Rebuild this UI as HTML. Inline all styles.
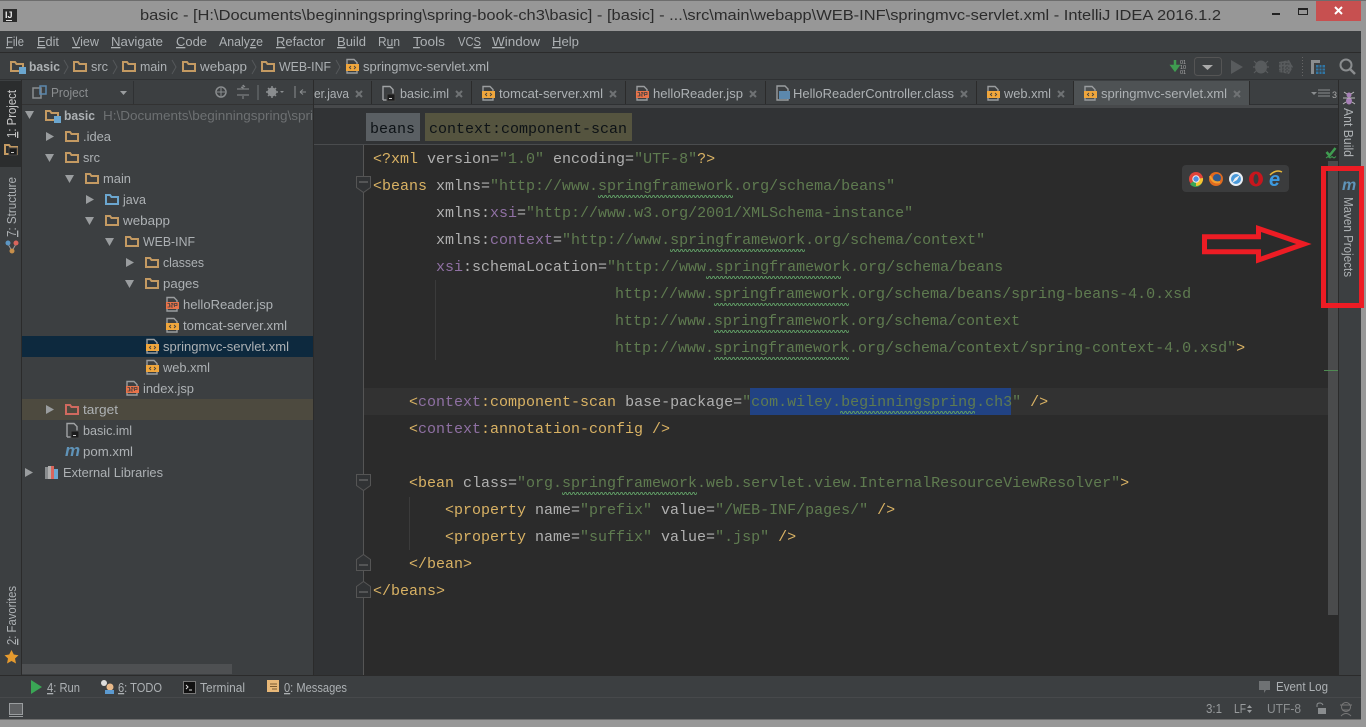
<!DOCTYPE html>
<html><head><meta charset="utf-8"><title>IntelliJ IDEA</title>
<style>
html,body{margin:0;padding:0;background:#3c3f41;overflow:hidden}
svg{display:block}
text{font-family:"Liberation Sans",sans-serif;font-size:13px;fill:#adb1b4;white-space:pre}
.c text,text.m{font-family:"Liberation Mono",monospace;font-size:15px}
.t{fill:#d9b264}.a{fill:#b0b0b0}.n{fill:#8f70a3}.s{fill:#5f7b50}
.u{text-decoration:underline}
</style></head><body>
<svg xmlns="http://www.w3.org/2000/svg" width="1366" height="727" viewBox="0 0 1366 727">
<defs>
<pattern id="w" width="4" height="3" patternUnits="userSpaceOnUse"><path d="M0 2.5L1 .5L2 .5L3 2.5L4 2.5" fill="none" stroke="#5f9a64" stroke-width=".9"/></pattern>
<g id="f"><path d="M1 3h4l1.500 2H13v7H1z" fill="none" stroke="#c49a62" stroke-width="2"/></g>
<g id="fb"><path d="M1 3h4l1.500 2H13v7H1z" fill="none" stroke="#6ba6cf" stroke-width="2"/></g>
<g id="fr"><path d="M1 3h4l1.500 2H13v7H1z" fill="none" stroke="#d0695f" stroke-width="2"/></g>
<g id="fm"><path d="M1 3h4l1.500 2H13v7H1z" fill="none" stroke="#c49a62" stroke-width="2"/><rect x="9" y="8" width="7" height="7" fill="#6ba6cf"/></g>
<g id="x"><path d="M1 5V.5h7l3 3V5M1 12v2h10v-2" fill="none" stroke="#9a9d9f" stroke-width="1.400"/><rect x="0" y="5" width="13" height="7" fill="#f0a63c"/><path d="M5 6.900L3.400 8.500L5 10.100M8 6.900L9.600 8.500L8 10.100" fill="none" stroke="#3c3f41" stroke-width=".9"/></g>
<g id="j"><path d="M1 5V.5h7l3 3V5M1 12v2h10v-2" fill="none" stroke="#9a9d9f" stroke-width="1.400"/><rect x="0" y="5" width="13" height="7" fill="#e8734a"/><path d="M1.500 6.500h2v3.500h-2M5 6.500h2v1.500H5v2h2M8.500 10V6.500h2.500v2H8.500" fill="none" stroke="#3c3f41" stroke-width=".8"/></g>
<g id="i"><path d="M1 14V.5h7l3 3V8" fill="none" stroke="#a0a3a5" stroke-width="1.400"/><path d="M1 14h4" stroke="#a0a3a5" stroke-width="1.400"/><rect x="5" y="8" width="8" height="7" fill="#1b1b1b" stroke="#444"/><rect x="7" y="12" width="3" height="1" fill="#ccc"/></g>
<path id="ar" d="M0 0L8 4.500L0 9z" fill="#9a9d9f"/>
<path id="ad" d="M0 0H9L4.500 8z" fill="#9a9d9f"/>
<path id="chev" d="M0 0L4 7L0 14" fill="none" stroke="#55585a" stroke-width="1"/>
<g id="cl"><path d="M0 0L6 6M6 0L0 6" stroke="#6f7274" stroke-width="2"/></g>
<g id="fd"><path d="M.5 .5H14.500V11.500L7.500 16.500L.5 11.500z" fill="#313335" stroke="#555"/><path d="M3 6H12" stroke="#777"/></g>
<g id="fu"><path d="M.5 16.500H14.500V5.500L7.500 .5L.5 5.500z" fill="#313335" stroke="#555"/><path d="M3 11H12" stroke="#777"/></g>
</defs>

<rect width="1366" height="727" fill="#3c3f41"/>

<!-- title bar -->
<rect width="1366" height="31" fill="#979797"/>
<rect width="1366" height="1" fill="#6d6d6d"/>
<rect x="3" y="9" width="14" height="13" fill="#2b2b2b"/>
<text x="5" y="18" style="font-size:9px;font-weight:bold;fill:#eee">IJ</text>
<rect x="6" y="20" width="6" height="1" fill="#ddd"/>
<text x="140" y="20" textLength="1081" lengthAdjust="spacingAndGlyphs" style="font-size:15px;fill:#2c2c2c">basic - [H:\Documents\beginningspring\spring-book-ch3\basic] - [basic] - ...\src\main\webapp\WEB-INF\springmvc-servlet.xml - IntelliJ IDEA 2016.1.2</text>
<rect x="1272" y="13" width="8" height="2" fill="#222"/>
<rect x="1298.500" y="8.500" width="9" height="6" fill="none" stroke="#222"/><rect x="1298" y="8" width="10" height="2" fill="#222"/>
<rect x="1316" y="1" width="45" height="20" fill="#c75050"/>
<path d="M1335 7L1342 14M1342 7L1335 14" stroke="#fff" stroke-width="2"/>

<!-- menu -->
<g>
<text x="6" y="46" textLength="18" lengthAdjust="spacingAndGlyphs"><tspan class="u">F</tspan>ile</text>
<text x="37" y="46" textLength="22" lengthAdjust="spacingAndGlyphs"><tspan class="u">E</tspan>dit</text>
<text x="72" y="46" textLength="27" lengthAdjust="spacingAndGlyphs"><tspan class="u">V</tspan>iew</text>
<text x="111" y="46" textLength="52" lengthAdjust="spacingAndGlyphs"><tspan class="u">N</tspan>avigate</text>
<text x="176" y="46" textLength="31" lengthAdjust="spacingAndGlyphs"><tspan class="u">C</tspan>ode</text>
<text x="219" y="46" textLength="44" lengthAdjust="spacingAndGlyphs">Analy<tspan class="u">z</tspan>e</text>
<text x="276" y="46" textLength="49" lengthAdjust="spacingAndGlyphs"><tspan class="u">R</tspan>efactor</text>
<text x="337" y="46" textLength="29" lengthAdjust="spacingAndGlyphs"><tspan class="u">B</tspan>uild</text>
<text x="378" y="46" textLength="22" lengthAdjust="spacingAndGlyphs">R<tspan class="u">u</tspan>n</text>
<text x="413" y="46" textLength="32" lengthAdjust="spacingAndGlyphs"><tspan class="u">T</tspan>ools</text>
<text x="458" y="46" textLength="23" lengthAdjust="spacingAndGlyphs">VC<tspan class="u">S</tspan></text>
<text x="492" y="46" textLength="48" lengthAdjust="spacingAndGlyphs"><tspan class="u">W</tspan>indow</text>
<text x="552" y="46" textLength="27" lengthAdjust="spacingAndGlyphs"><tspan class="u">H</tspan>elp</text>
</g>
<rect y="52" width="1361" height="1" fill="#2b2b2b"/>

<!-- nav bar -->
<use href="#fm" x="10" y="59"/><text x="29" y="71" textLength="31" lengthAdjust="spacingAndGlyphs" style="font-weight:bold">basic</text>
<use href="#chev" x="64" y="60"/>
<use href="#f" x="73" y="59"/><text x="91" y="71" textLength="17" lengthAdjust="spacingAndGlyphs">src</text>
<use href="#chev" x="113" y="60"/>
<use href="#f" x="122" y="59"/><text x="140" y="71" textLength="27" lengthAdjust="spacingAndGlyphs">main</text>
<use href="#chev" x="172" y="60"/>
<use href="#f" x="182" y="59"/><text x="200" y="71" textLength="47" lengthAdjust="spacingAndGlyphs">webapp</text>
<use href="#chev" x="252" y="60"/>
<use href="#f" x="261" y="59"/><text x="279" y="71" textLength="52" lengthAdjust="spacingAndGlyphs">WEB-INF</text>
<use href="#chev" x="336" y="60"/>
<use href="#x" x="346" y="59"/><text x="363" y="71" textLength="126" lengthAdjust="spacingAndGlyphs">springmvc-servlet.xml</text>
<!-- toolbar right -->
<path d="M1175 60v7M1172 66h6l-3 4z" stroke="#3f9c50" stroke-width="2.500" fill="#3f9c50"/>
<text x="1180" y="64" style="font-size:5.500px;fill:#aaa">01</text><text x="1180" y="69" style="font-size:5.500px;fill:#aaa">10</text><text x="1180" y="74" style="font-size:5.500px;fill:#aaa">01</text>
<rect x="1194.500" y="57.500" width="27" height="18" rx="3" fill="#3c3f41" stroke="#555"/>
<path d="M1202 65h11l-5.500 5z" fill="#aaa"/>
<path d="M1231 60L1243 67L1231 74z" fill="#585b5d"/>
<ellipse cx="1261" cy="67" rx="6" ry="6.500" fill="#585b5d"/><path d="M1254 61l3 3M1268 61l-3 3M1253 67h3M1269 67h-3M1254 73l3-3M1268 73l-3-3" stroke="#585b5d" stroke-width="1.200"/>
<path d="M1279 62L1289 60L1293 67L1289 74L1279 72z" fill="#585b5d"/><path d="M1283 60v14M1287 60v14M1279 64h14M1279 68h14M1279 71h14" stroke="#3c3f41" stroke-width="1" stroke-dasharray="1.500 1.500"/>
<path d="M1302.500 57v20" stroke="#666" stroke-dasharray="1 2"/>
<path d="M1311 60h9v3h-6v11h-3z" fill="#8a8d8f"/><rect x="1316" y="65" width="9" height="9" fill="#2f76a5"/><path d="M1316 68h9M1316 71h9M1319 65v9M1322 65v9" stroke="#3c3f41"/>
<circle cx="1346" cy="65" r="5.500" fill="none" stroke="#8a8d8f" stroke-width="2"/><path d="M1350 69l5 5" stroke="#8a8d8f" stroke-width="2.500"/>
<rect y="79" width="1361" height="1" fill="#2f3133"/>

<!-- left strip -->
<rect x="21" y="80" width="1" height="595" fill="#2b2b2b"/>
<rect x="0" y="81" width="21" height="86" fill="#2b2d2e"/>
<text transform="translate(16,138) rotate(-90)" textLength="48" lengthAdjust="spacingAndGlyphs" style="fill:#c8c8c8"><tspan class="u">1</tspan>: Project</text>
<use href="#f" x="4" y="142"/><rect x="9" y="148" width="8" height="7" fill="#1b1b1b" stroke="#444"/><rect x="11" y="152" width="3" height="1" fill="#ccc"/>
<text transform="translate(16,237) rotate(-90)" textLength="60" lengthAdjust="spacingAndGlyphs"><tspan class="u">7</tspan>: Structure</text>
<path d="M8 244L12 251L16 244" fill="none" stroke="#999"/><circle cx="8" cy="243" r="2.500" fill="#5c96c4"/><circle cx="16" cy="243" r="2.500" fill="#d9655c"/><circle cx="12" cy="251" r="2.500" fill="#c68e4a"/>
<text transform="translate(16,645) rotate(-90)" textLength="59" lengthAdjust="spacingAndGlyphs"><tspan class="u">2</tspan>: Favorites</text>
<path d="M11.500 650L13.800 654.500L18.500 655.200L15 658.500L16 663.500L11.500 661L7 663.500L8 658.500L4.500 655.200L9.200 654.500z" fill="#e59a2e"/>

<!-- project panel -->
<rect x="22" y="80" width="291" height="595" fill="#3c3f41"/>
<rect x="22" y="104" width="291" height="1" fill="#323232"/>
<rect x="33" y="88" width="8" height="10" fill="none" stroke="#8a8d8f" stroke-width="1.500"/><rect x="40" y="86" width="6" height="8" fill="none" stroke="#5c88ad" stroke-width="1.500"/>
<text x="51" y="97" textLength="37" lengthAdjust="spacingAndGlyphs" style="fill:#8b8e90">Project</text>
<path d="M120 91h7l-3.500 4z" fill="#9a9d9f"/>
<rect x="133" y="81" width="1" height="23" fill="#2f3133"/>
<circle cx="221" cy="92" r="5" fill="none" stroke="#8a8d8f" stroke-width="1.500"/><path d="M221 88v8M217 92h8" stroke="#8a8d8f"/>
<path d="M237 89h12M237 95h12M243 85v3l-2-1M243 85l2 2M243 99v-3" stroke="#8a8d8f" fill="none"/>
<rect x="257" y="85" width="2" height="15" fill="#565a5c"/>
<circle cx="272" cy="92" r="4.500" fill="#8a8d8f"/><circle cx="272" cy="92" r="1.500" fill="#3c3f41"/><path d="M272 86v12M266 92h12M268 88l8 8M276 88l-8 8" stroke="#8a8d8f" stroke-width="1.500"/><path d="M280 91h4l-2 2z" fill="#8a8d8f"/>
<path d="M295 86v12M300 92h6M300 92l3-2.500M300 92l3 2.500" stroke="#8a8d8f" fill="none"/>

<!-- tree -->
<rect x="22" y="336" width="291" height="21" fill="#0d293e"/>
<rect x="22" y="399" width="291" height="21" fill="#4d4a3f"/>
<use href="#ad" x="25" y="111"/><use href="#fm" x="45" y="108"/>
<text x="64" y="120" textLength="31" lengthAdjust="spacingAndGlyphs" style="font-weight:bold">basic</text>
<text x="103" y="120" textLength="210" lengthAdjust="spacingAndGlyphs" style="fill:#6d7072">H:\Documents\beginningspring\spri</text>
<use href="#ar" x="46" y="132"/><use href="#f" x="65" y="129"/><text x="83" y="141" textLength="28" lengthAdjust="spacingAndGlyphs">.idea</text>
<use href="#ad" x="45" y="154"/><use href="#f" x="65" y="150"/><text x="83" y="162" textLength="17" lengthAdjust="spacingAndGlyphs">src</text>
<use href="#ad" x="65" y="175"/><use href="#f" x="85" y="171"/><text x="103" y="183" textLength="28" lengthAdjust="spacingAndGlyphs">main</text>
<use href="#ar" x="86" y="195"/><use href="#fb" x="105" y="192"/><text x="123" y="204" textLength="23" lengthAdjust="spacingAndGlyphs">java</text>
<use href="#ad" x="85" y="217"/><use href="#f" x="105" y="213"/><text x="123" y="225" textLength="47" lengthAdjust="spacingAndGlyphs">webapp</text>
<use href="#ad" x="105" y="238"/><use href="#f" x="125" y="234"/><text x="143" y="246" textLength="52" lengthAdjust="spacingAndGlyphs">WEB-INF</text>
<use href="#ar" x="126" y="258"/><use href="#f" x="145" y="255"/><text x="163" y="267" textLength="41" lengthAdjust="spacingAndGlyphs">classes</text>
<use href="#ad" x="125" y="280"/><use href="#f" x="145" y="276"/><text x="163" y="288" textLength="36" lengthAdjust="spacingAndGlyphs">pages</text>
<use href="#j" x="166" y="297"/><text x="183" y="309" textLength="90" lengthAdjust="spacingAndGlyphs">helloReader.jsp</text>
<use href="#x" x="166" y="318"/><text x="183" y="330" textLength="104" lengthAdjust="spacingAndGlyphs">tomcat-server.xml</text>
<use href="#x" x="146" y="339"/><text x="163" y="351" textLength="126" lengthAdjust="spacingAndGlyphs">springmvc-servlet.xml</text>
<use href="#x" x="146" y="360"/><text x="163" y="372" textLength="47" lengthAdjust="spacingAndGlyphs">web.xml</text>
<use href="#j" x="126" y="381"/><text x="143" y="393" textLength="51" lengthAdjust="spacingAndGlyphs">index.jsp</text>
<use href="#ar" x="46" y="405"/><use href="#fr" x="65" y="402"/><text x="83" y="414" textLength="35" lengthAdjust="spacingAndGlyphs">target</text>
<use href="#i" x="66" y="423"/><text x="83" y="435" textLength="49" lengthAdjust="spacingAndGlyphs">basic.iml</text>
<text x="65" y="456" style="font-size:17px;font-weight:bold;font-style:italic;fill:#5f93b8">m</text><text x="83" y="456" textLength="50" lengthAdjust="spacingAndGlyphs">pom.xml</text>
<use href="#ar" x="25" y="468"/>
<rect x="45" y="467" width="3" height="12" fill="#8a8d8f"/><rect x="48" y="466" width="3" height="13" fill="#b0b0b0"/><rect x="51" y="466" width="3" height="13" fill="#d9655c"/><rect x="54" y="469" width="4" height="10" fill="#6ba6cf"/>
<text x="63" y="477" textLength="100" lengthAdjust="spacingAndGlyphs">External Libraries</text>
<rect x="22" y="664" width="210" height="10" fill="#4e5052"/>
<rect x="313" y="80" width="1" height="595" fill="#2b2b2b"/>

<!-- tabs -->
<rect x="314" y="80" width="1025" height="25" fill="#3c3f41"/>
<rect x="314" y="105" width="1025" height="3" fill="#47494b"/>
<rect x="314" y="104" width="1025" height="1" fill="#2f3133"/>
<rect x="1074" y="81" width="175" height="24" fill="#4e5254"/>
<rect x="371" y="81" width="1" height="23" fill="#2b2b2b"/>
<rect x="471" y="81" width="1" height="23" fill="#2b2b2b"/>
<rect x="625" y="81" width="1" height="23" fill="#2b2b2b"/>
<rect x="765" y="81" width="1" height="23" fill="#2b2b2b"/>
<rect x="976" y="81" width="1" height="23" fill="#2b2b2b"/>
<rect x="1073" y="81" width="1" height="24" fill="#2b2b2b"/>
<rect x="1249" y="81" width="1" height="24" fill="#2b2b2b"/>
<text x="314" y="98" textLength="35" lengthAdjust="spacingAndGlyphs">er.java</text><use href="#cl" x="356" y="91"/>
<use href="#i" x="382" y="86"/><text x="400" y="98" textLength="49" lengthAdjust="spacingAndGlyphs">basic.iml</text><use href="#cl" x="456" y="91"/>
<use href="#x" x="482" y="86"/><text x="499" y="98" textLength="104" lengthAdjust="spacingAndGlyphs">tomcat-server.xml</text><use href="#cl" x="610" y="91"/>
<use href="#j" x="636" y="86"/><text x="653" y="98" textLength="90" lengthAdjust="spacingAndGlyphs">helloReader.jsp</text><use href="#cl" x="750" y="91"/>
<path d="M777 86h8l3 3v11h-11z" fill="none" stroke="#9a9d9f" stroke-width="1.400"/><rect x="779" y="91" width="11" height="8" fill="#5c88ad"/>
<text x="793" y="98" textLength="161" lengthAdjust="spacingAndGlyphs">HelloReaderController.class</text><use href="#cl" x="961" y="91"/>
<use href="#x" x="987" y="86"/><text x="1004" y="98" textLength="47" lengthAdjust="spacingAndGlyphs">web.xml</text><use href="#cl" x="1058" y="91"/>
<use href="#x" x="1084" y="86"/><text x="1101" y="98" textLength="126" lengthAdjust="spacingAndGlyphs">springmvc-servlet.xml</text><use href="#cl" x="1234" y="91"/>
<path d="M1311 92h6l-3 3z" fill="#8a8d8f"/><path d="M1318 90h12M1318 93h12M1318 96h12" stroke="#8a8d8f"/><text x="1332" y="98" style="font-size:9px;fill:#aaa">3</text>

<!-- breadcrumb -->
<rect x="314" y="108" width="1025" height="36" fill="#313335"/>
<rect x="314" y="144" width="1025" height="1" fill="#4a4c4e"/>
<rect x="366" y="113" width="54" height="28" fill="#5a5f63"/>
<rect x="425" y="113" width="207" height="28" fill="#55543f"/>
<text class="m" x="370" y="133" style="fill:#0d1216">beans</text>
<text class="m" x="429" y="133" style="fill:#0d1216">context:component-scan</text>

<!-- editor -->
<rect x="314" y="145" width="50" height="530" fill="#313335"/>
<rect x="363" y="145" width="1" height="530" fill="#555"/>
<rect x="364" y="145" width="975" height="530" fill="#2b2b2b"/>
<rect x="364" y="388" width="964" height="27" fill="#323232"/>
<rect x="750" y="388" width="261" height="27" fill="#214283"/>
<path d="M435.500 280V360M409.500 497V550" stroke="#3b3b3b"/>
<use href="#fd" x="356" y="176"/><use href="#fd" x="356" y="474"/>
<use href="#fu" x="356" y="554"/><use href="#fu" x="356" y="581"/>

<g class="c">
<text x="373" y="163"><tspan class="t">&lt;?xml</tspan><tspan class="a"> version=</tspan><tspan class="s">"1.0"</tspan><tspan class="a"> encoding=</tspan><tspan class="s">"UTF-8"</tspan><tspan class="t">?&gt;</tspan></text>
<text x="373" y="190"><tspan class="t">&lt;beans</tspan><tspan class="a"> xmlns=</tspan><tspan class="s">"http://www.springframework.org/schema/beans"</tspan></text>
<text x="436" y="217"><tspan class="a">xmlns:</tspan><tspan class="n">xsi</tspan><tspan class="a">=</tspan><tspan class="s">"http://www.w3.org/2001/XMLSchema-instance"</tspan></text>
<text x="436" y="244"><tspan class="a">xmlns:</tspan><tspan class="n">context</tspan><tspan class="a">=</tspan><tspan class="s">"http://www.springframework.org/schema/context"</tspan></text>
<text x="436" y="271"><tspan class="n">xsi</tspan><tspan class="a">:schemaLocation=</tspan><tspan class="s">"http://www.springframework.org/schema/beans</tspan></text>
<text x="615" y="298" class="s">http://www.springframework.org/schema/beans/spring-beans-4.0.xsd</text>
<text x="615" y="325" class="s">http://www.springframework.org/schema/context</text>
<text x="615" y="352"><tspan class="s">http://www.springframework.org/schema/context/spring-context-4.0.xsd"</tspan><tspan class="t">&gt;</tspan></text>
<text x="409" y="406"><tspan class="t">&lt;</tspan><tspan class="n">context</tspan><tspan class="t">:component-scan</tspan><tspan class="a"> base-package=</tspan><tspan class="s">"com.wiley.beginningspring.ch3"</tspan><tspan class="t"> /&gt;</tspan></text>
<text x="409" y="433"><tspan class="t">&lt;</tspan><tspan class="n">context</tspan><tspan class="t">:annotation-config /&gt;</tspan></text>
<text x="409" y="487"><tspan class="t">&lt;bean</tspan><tspan class="a"> class=</tspan><tspan class="s">"org.springframework.web.servlet.view.InternalResourceViewResolver"</tspan><tspan class="t">&gt;</tspan></text>
<text x="445" y="514"><tspan class="t">&lt;property</tspan><tspan class="a"> name=</tspan><tspan class="s">"prefix"</tspan><tspan class="a"> value=</tspan><tspan class="s">"/WEB-INF/pages/"</tspan><tspan class="t"> /&gt;</tspan></text>
<text x="445" y="541"><tspan class="t">&lt;property</tspan><tspan class="a"> name=</tspan><tspan class="s">"suffix"</tspan><tspan class="a"> value=</tspan><tspan class="s">".jsp"</tspan><tspan class="t"> /&gt;</tspan></text>
<text x="409" y="568" class="t">&lt;/bean&gt;</text>
<text x="373" y="595" class="t">&lt;/beans&gt;</text>
</g>
<g fill="url(#w)">
<rect x="598" y="195" width="135" height="3"/>
<rect x="670" y="249" width="135" height="3"/>
<rect x="706" y="276" width="135" height="3"/>
<rect x="714" y="303" width="135" height="3"/>
<rect x="714" y="330" width="135" height="3"/>
<rect x="714" y="357" width="135" height="3"/>
<rect x="840" y="411" width="135" height="3"/>
<rect x="562" y="492" width="135" height="3"/>
</g>

<!-- editor right stripe -->
<rect x="1328" y="161" width="10" height="454" fill="#4a4b4c"/>
<rect x="1338" y="80" width="1" height="595" fill="#2b2b2b"/>
<rect x="1324" y="370" width="14" height="1" fill="#4f8a52"/>
<path d="M1326.500 152L1329.500 155.500L1335.500 148" fill="none" stroke="#3f9c50" stroke-width="2.500"/>
<path d="M1326 158l2-1.500l2 1.500l2-1.500l2 1.500l2-1.500" fill="none" stroke="#3f9c50"/>

<!-- browser popup -->
<rect x="1182" y="165" width="107" height="27" rx="4" fill="#3b3c3d"/>
<circle cx="1196" cy="179" r="7" fill="#e0443a"/><path d="M1196 179L1202 183A7 7 0 0 1 1190 184z" fill="#3aa655"/><path d="M1196 179L1203 178A7 7 0 0 1 1196 186z" fill="#f6c533"/><circle cx="1196" cy="179" r="3.200" fill="#4a8fe0" stroke="#eee"/>
<circle cx="1216" cy="179" r="7" fill="#e06a1f"/><circle cx="1217" cy="178" r="4" fill="#2e5a8f"/><path d="M1210 176q3 8 10 6" fill="none" stroke="#f0a030" stroke-width="2"/>
<circle cx="1236" cy="179" r="7" fill="#e8eef4"/><circle cx="1236" cy="179" r="5" fill="#4a9ad9"/><path d="M1240 175L1237 180L1232 183L1235 178z" fill="#f0f0f0"/>
<ellipse cx="1256" cy="179" rx="7" ry="7.500" fill="#c8161d"/><ellipse cx="1256" cy="179" rx="2.500" ry="5" fill="#3b3c3d"/>
<text x="1269" y="186" style="font-size:20px;font-style:italic;font-weight:bold;fill:#3d9ae0">e</text>
<path d="M1270 175q6-6 12-3" fill="none" stroke="#e8b93a" stroke-width="1.500"/>

<!-- right strip -->
<ellipse cx="1349" cy="101" rx="3" ry="3.500" fill="#a880b8"/><circle cx="1349" cy="95" r="2.500" fill="#a880b8"/>
<path d="M1344 92l3 2M1354 92l-3 2M1343 98h12M1343 104l3-2M1355 104l-3-2" stroke="#b9b9b9"/>
<text transform="translate(1344,108) rotate(90)" textLength="49" lengthAdjust="spacingAndGlyphs">Ant Build</text>
<text x="1342" y="190" style="font-size:16px;font-weight:bold;font-style:italic;fill:#5f93b8">m</text>
<text transform="translate(1344,197) rotate(90)" textLength="80" lengthAdjust="spacingAndGlyphs">Maven Projects</text>

<!-- bottom bars -->
<rect y="675" width="1361" height="1" fill="#2b2b2b"/>
<rect y="697" width="1361" height="1" fill="#47494b"/>
<path d="M31 680L42 687L31 694z" fill="#3aa655"/>
<text x="47" y="692" textLength="33" lengthAdjust="spacingAndGlyphs"><tspan class="u">4</tspan>: Run</text>
<circle cx="104" cy="683" r="3" fill="#ddd"/><circle cx="110" cy="687" r="3.500" fill="#e8b98a"/><rect x="105" y="690" width="9" height="4" fill="#5c9ad0"/>
<text x="118" y="692" textLength="44" lengthAdjust="spacingAndGlyphs"><tspan class="u">6</tspan>: TODO</text>
<rect x="183.500" y="681.500" width="12" height="12" fill="#111" stroke="#777"/><path d="M186 685l2 2l-2 2M189 690h3" fill="none" stroke="#ddd"/>
<text x="200" y="692" textLength="45" lengthAdjust="spacingAndGlyphs">Terminal</text>
<rect x="267" y="680" width="12" height="12" fill="#e8b878"/><path d="M270 684h7M270 686.500h7M272 689h5" stroke="#7a5a30"/>
<text x="284" y="692" textLength="63" lengthAdjust="spacingAndGlyphs"><tspan class="u">0</tspan>: Messages</text>
<path d="M1259 681h11v9h-4l-2 3v-3h-5z" fill="#6f7274"/>
<text x="1276" y="691" textLength="52" lengthAdjust="spacingAndGlyphs">Event Log</text>
<rect x="9.500" y="703.500" width="13" height="11" fill="#5f6163" stroke="#9a9d9f"/><rect x="9" y="716" width="14" height="1" fill="#9a9d9f"/>
<text x="1206" y="713" textLength="16" lengthAdjust="spacingAndGlyphs" style="fill:#999c9e">3:1</text>
<text x="1234" y="713" textLength="12" lengthAdjust="spacingAndGlyphs" style="fill:#999c9e">LF</text>
<path d="M1247 708l2.500-3l2.500 3zM1247 710l2.500 3l2.500-3z" fill="#999c9e"/>
<text x="1267" y="713" textLength="34" lengthAdjust="spacingAndGlyphs" style="fill:#8b8e90">UTF-8</text>
<rect x="1318" y="708" width="8" height="6" fill="#8a8d8f"/><path d="M1317 707v-2q0-2 3-2q2 0 3 2" fill="none" stroke="#8a8d8f"/>
<circle cx="1346" cy="707" r="4.500" fill="none" stroke="#777"/><path d="M1340 705h12M1341 716q5-5 10 0M1342 710h8" stroke="#777" fill="none"/>

<!-- window frame -->
<rect x="1361" y="31" width="5" height="696" fill="#979797"/>
<rect x="0" y="719" width="1366" height="8" fill="#979797"/>
<rect x="0" y="719" width="1361" height="1" fill="#6d6d6d"/>

<!-- red annotations -->
<rect x="1323.500" y="168.500" width="38" height="137" fill="none" stroke="#ed1c24" stroke-width="5"/>
<path d="M1204.500 236.800H1258.500V228.500L1304 244L1258.500 260V251.800H1204.500z" fill="none" stroke="#ed1c24" stroke-width="5"/>
</svg>
</body></html>
